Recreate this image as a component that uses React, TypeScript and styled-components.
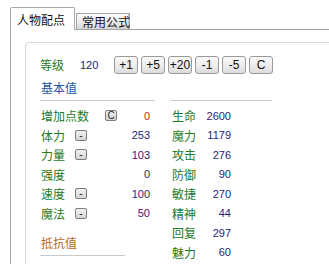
import React from "react";
import styled, { createGlobalStyle } from "styled-components";

const Global = createGlobalStyle`
  html, body { margin: 0; padding: 0; background: #fff; overflow: hidden; }
  body { font-family: "Noto Sans CJK SC", "Liberation Sans", sans-serif; }
`;

const Page = styled.div`
  padding: 7px 0 0 10px;
  width: 319px;
  height: 257px;
  overflow: hidden;
`;

const TabBar = styled.div`
  display: flex;
  align-items: flex-end;
  height: 22px;
`;

const Tab = styled.div<{ $active?: boolean }>`
  box-sizing: border-box;
  border: 1px solid ${(p) => (p.$active ? "#a9a9a9" : "#a3a3a3")};
  border-bottom: none;
  font-size: 12px;
  color: #111;
  white-space: nowrap;
  ${(p) =>
    p.$active
      ? `
    position: relative;
    z-index: 1;
    width: 65px;
    height: 23px;
    margin-bottom: -1px;
    background: #fff;
    padding: 4px 0 0 6px;
    line-height: 15px;
    border-radius: 2px 2px 0 0;
  `
      : `
    width: 54px;
    height: 16px;
    margin-left: 1px;
    background: linear-gradient(#fbfbfb, #e9e9e9 60%, #d6d6d6);
    box-shadow: inset -1px 0 0 #c4c4c4;
    padding: 0 0 0 5px;
    line-height: 15px;
  `}
`;

const Panel = styled.div`
  border-top: 1px solid #a3a3a3;
  border-left: 1px solid #a9a9a9;
  padding: 12px 0 0 14px;
  width: 400px;
  height: 300px;
`;

const InnerBox = styled.div`
  border: 1px solid #d6d6d6;
  border-radius: 4px;
  padding: 12px 0 0 14px;
  width: 400px;
  height: 300px;
`;

const LevelRow = styled.div`
  display: flex;
  align-items: center;
  height: 19px;
`;

const LevelLabel = styled.span`
  width: 40px;
  font-size: 12px;
  color: #237a1f;
`;

const LevelValue = styled.span`
  width: 34px;
  font-family: "Liberation Sans", sans-serif;
  font-size: 11px;
  color: #1e1e74;
`;

const Buttons = styled.div`
  display: flex;
  gap: 3px;
`;

const StepButton = styled.button`
  box-sizing: border-box;
  width: 24px;
  height: 18px;
  padding: 0;
  border: 1px solid #9a9a9a;
  border-radius: 3px;
  background: linear-gradient(#fafafa, #ececec 55%, #dcdcdc);
  font-family: "Liberation Sans", sans-serif;
  font-size: 12px;
  color: #111;
  line-height: 16px;
`;

const Columns = styled.div`
  display: grid;
  grid-template-columns: 115px 102px;
  column-gap: 15px;
  margin-top: 7px;
  align-items: start;
`;

const Column = styled.div`
  display: flex;
  flex-direction: column;
`;

const SectionHead = styled.div<{ $color?: string; $width?: number; $gap?: number }>`
  width: ${(p) => (p.$width ? `${p.$width}px` : "auto")};
  height: 14px;
  line-height: 14px;
  padding: 0 0 5px 1px;
  margin-top: ${(p) => p.$gap ?? 0}px;
  border-bottom: 1px solid #c9c9c9;
  font-size: 12px;
  color: ${(p) => p.$color ?? "#2656a0"};
`;

const Rows = styled.div`
  margin-top: 5px;
  display: flex;
  flex-direction: column;
`;

const Row = styled.div`
  display: flex;
  align-items: center;
  height: 19.5px;
`;

const Label = styled.span<{ $wide?: boolean }>`
  width: ${(p) => (p.$wide ? 64 : 34)}px;
  padding-left: 1px;
  font-size: 12px;
  color: #237a1f;
  white-space: nowrap;
`;

const MiniButton = styled.span`
  box-sizing: border-box;
  display: inline-flex;
  align-items: center;
  justify-content: center;
  width: 12px;
  height: 11px;
  border: 1px solid #7d7d7d;
  border-radius: 2px;
  background: linear-gradient(#f2f2f2, #d4d4d4);
  font-family: "Liberation Sans", sans-serif;
  font-size: 10px;
  line-height: 9px;
  color: #222;
`;

const Value = styled.span<{ $red?: boolean }>`
  flex: 1;
  text-align: right;
  padding-right: 5px;
  font-family: "Liberation Sans", sans-serif;
  font-size: 11px;
  color: ${(p) => (p.$red ? "#cc2a2a" : "#1e1e74")};
`;

const RightLabel = styled.span`
  width: 34px;
  padding-left: 2px;
  box-sizing: border-box;
  font-size: 12px;
  color: #237a1f;
`;

const RightValue = styled.span`
  width: 27px;
  text-align: right;
  font-family: "Liberation Sans", sans-serif;
  font-size: 11px;
  color: #1e1e74;
`;

const leftRows: { label: string; btn?: string; value: string; wide?: boolean; red?: boolean }[] = [
  { label: "增加点数", btn: "C", value: "0", wide: true, red: true },
  { label: "体力", btn: "-", value: "253" },
  { label: "力量", btn: "-", value: "103" },
  { label: "强度", value: "0" },
  { label: "速度", btn: "-", value: "100" },
  { label: "魔法", btn: "-", value: "50" },
];

const rightRows = [
  ["生命", "2600"],
  ["魔力", "1179"],
  ["攻击", "276"],
  ["防御", "90"],
  ["敏捷", "270"],
  ["精神", "44"],
  ["回复", "297"],
  ["魅力", "60"],
];

const steps = ["+1", "+5", "+20", "-1", "-5", "C"];

export default function App() {
  return (
    <Page>
      <Global />
      <TabBar>
        <Tab $active>人物配点</Tab>
        <Tab>常用公式</Tab>
      </TabBar>
      <Panel>
        <InnerBox>
          <LevelRow>
            <LevelLabel>等级</LevelLabel>
            <LevelValue>120</LevelValue>
            <Buttons>
              {steps.map((s) => (
                <StepButton key={s}>{s}</StepButton>
              ))}
            </Buttons>
          </LevelRow>
          <Columns>
            <Column>
              <SectionHead>基本值</SectionHead>
              <Rows>
                {leftRows.map((r) => (
                  <Row key={r.label}>
                    <Label $wide={r.wide}>{r.label}</Label>
                    {r.btn ? <MiniButton>{r.btn}</MiniButton> : null}
                    <Value $red={r.red}>{r.value}</Value>
                  </Row>
                ))}
              </Rows>
              <SectionHead $color="#b8682a" $width={84} $gap={13}>
                抵抗值
              </SectionHead>
            </Column>
            <Column>
              <SectionHead>{"\u00a0"}</SectionHead>
              <Rows>
                {rightRows.map(([l, v]) => (
                  <Row key={l}>
                    <RightLabel>{l}</RightLabel>
                    <RightValue>{v}</RightValue>
                  </Row>
                ))}
              </Rows>
            </Column>
          </Columns>
        </InnerBox>
      </Panel>
    </Page>
  );
}
